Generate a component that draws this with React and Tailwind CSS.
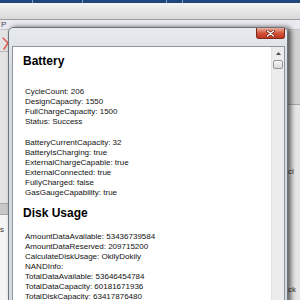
const battery = [
  'CycleCount: 206',
  'DesignCapacity: 1550',
  'FullChargeCapacity: 1500',
  'Status: Success',
];

const batteryMore = [
  'BatteryCurrentCapacity: 32',
  'BatteryIsCharging: true',
  'ExternalChargeCapable: true',
  'ExternalConnected: true',
  'FullyCharged: false',
  'GasGaugeCapability: true',
];

const disk = [
  'AmountDataAvailable: 53436739584',
  'AmountDataReserved: 209715200',
  'CalculateDiskUsage: OkilyDokily',
  'NANDInfo:',
  'TotalDataAvailable: 53646454784',
  'TotalDataCapacity: 60181671936',
  'TotalDiskCapacity: 63417876480',
];

const Lines = ({ items, className }) => (
  <div className={`flex flex-col pl-[12px] ${className}`}>
    {items.map((t) => (
      <div key={t} className="text-[8px] leading-[10px] text-[#111] whitespace-nowrap">
        {t}
      </div>
    ))}
  </div>
);

export default function App() {
  return (
    <div className="relative w-[300px] h-[300px] overflow-hidden bg-[#e2e2e2] font-['Liberation_Sans',Arial,sans-serif]">
      {/* app behind the dialog */}
      <div className="flex flex-col h-full">
        <div className="h-[3px] flex bg-[#1f477c]">
          <div className="w-[33px] border-r border-[#7c9cc4]" />
          <div className="w-[50px] border-r border-[#7c9cc4]" />
          <div className="w-[84px] border-r border-[#7c9cc4]" />
          <div className="w-[16px] border-r border-[#7c9cc4]" />
        </div>
        <div className="h-[17px] bg-gradient-to-b from-[#f4f4f4] to-[#d9d9d9] border-b border-[#9d9d9d]" />
        <div className="h-[10px] bg-[#e9e9ef] border-b border-[#c4c4cc] pl-[1px] text-[8px] leading-[9px] text-[#4a4a66]">
          P
        </div>
        <div className="flex-1 flex">
          <div className="w-[40px] flex flex-col bg-[#e3e3e3]">
            <div className="h-[22px] border-b border-[#b4b4b4] pl-[2px] pt-[7px]">
              <svg width="8" height="13" viewBox="0 0 8 13">
                <path d="M1 1 L6 6 M6 6 L2 12" stroke="#e0605a" strokeWidth="1.6" fill="none" strokeLinecap="round" />
              </svg>
            </div>
            <div className="h-[151px]" />
            <div className="h-[12px] bg-[#c9c9c9] border-y border-[#a9a9a9]" />
            <div className="flex-1 bg-[#f5f5f5] pt-[10px] text-[8px] leading-[10px] text-[#333]">
              s
            </div>
          </div>
          <div className="flex-1" />
          <div className="w-[14px] flex flex-col">
            <div className="h-[75px] bg-[#d2d2d2] border-b border-[#a8a8a8]" />
            <div className="flex-1 bg-[#e6e6e6] flex flex-col pt-[62px] text-[8px] leading-[10px] text-[#333] pl-[2px]">
              <div>cl</div>
              <div className="mt-[108px]">ck</div>
            </div>
          </div>
        </div>
      </div>

      {/* dialog window */}
      <div className="absolute left-[8px] top-[27px] w-[280px] h-[285px] flex flex-col rounded-t-[5px] border border-[#6b737c] bg-gradient-to-b from-[#e8ebee] to-[#d6dbe0] to-[40px] shadow-[3px_0_5px_rgba(0,0,0,0.6)]">
        <div className="h-[18px] flex justify-end pr-[2px]">
          <div className="w-[29px] h-[11px] rounded-b-[3px] border border-t-0 border-[#7a2a1c] bg-gradient-to-b from-[#eab0a0] via-[#d4543a] to-[#c2381e] flex items-center justify-center">
            <svg width="9" height="7" viewBox="0 0 9 7">
              <path d="M1.5 1 L7.5 6 M7.5 1 L1.5 6" stroke="#5a1a10" strokeWidth="2.6" strokeLinecap="round" />
              <path d="M1.5 1 L7.5 6 M7.5 1 L1.5 6" stroke="#ffffff" strokeWidth="1.4" strokeLinecap="round" />
            </svg>
          </div>
        </div>
        <div className="flex-1 ml-[3px] mr-[2px] flex border border-[#8d959e] bg-white">
          <div className="flex-1 flex flex-col pt-[7px] overflow-hidden">
            <div className="pl-[10px] text-[12px] leading-[14px] font-bold text-black">Battery</div>
            <Lines items={battery} className="mt-[19px]" />
            <Lines items={batteryMore} className="mt-[11px]" />
            <div className="pl-[10px] mt-[8px] text-[12px] leading-[14px] font-bold text-black">Disk Usage</div>
            <Lines items={disk} className="mt-[12px]" />
          </div>
          <div className="w-[13px] flex flex-col items-center bg-[#ececec] border-l border-[#e2e2e2]">
            <div className="h-[13px] pt-[5px]">
              <svg width="5" height="3" viewBox="0 0 5 3">
                <path d="M0 3 L2.5 0 L5 3Z" fill="#4a4a4a" />
              </svg>
            </div>
            <div className="w-[10px] h-[9px] rounded-[2px] border border-[#979797] bg-gradient-to-b from-[#f6f6f6] to-[#dadada]" />
          </div>
        </div>
      </div>
    </div>
  );
}
